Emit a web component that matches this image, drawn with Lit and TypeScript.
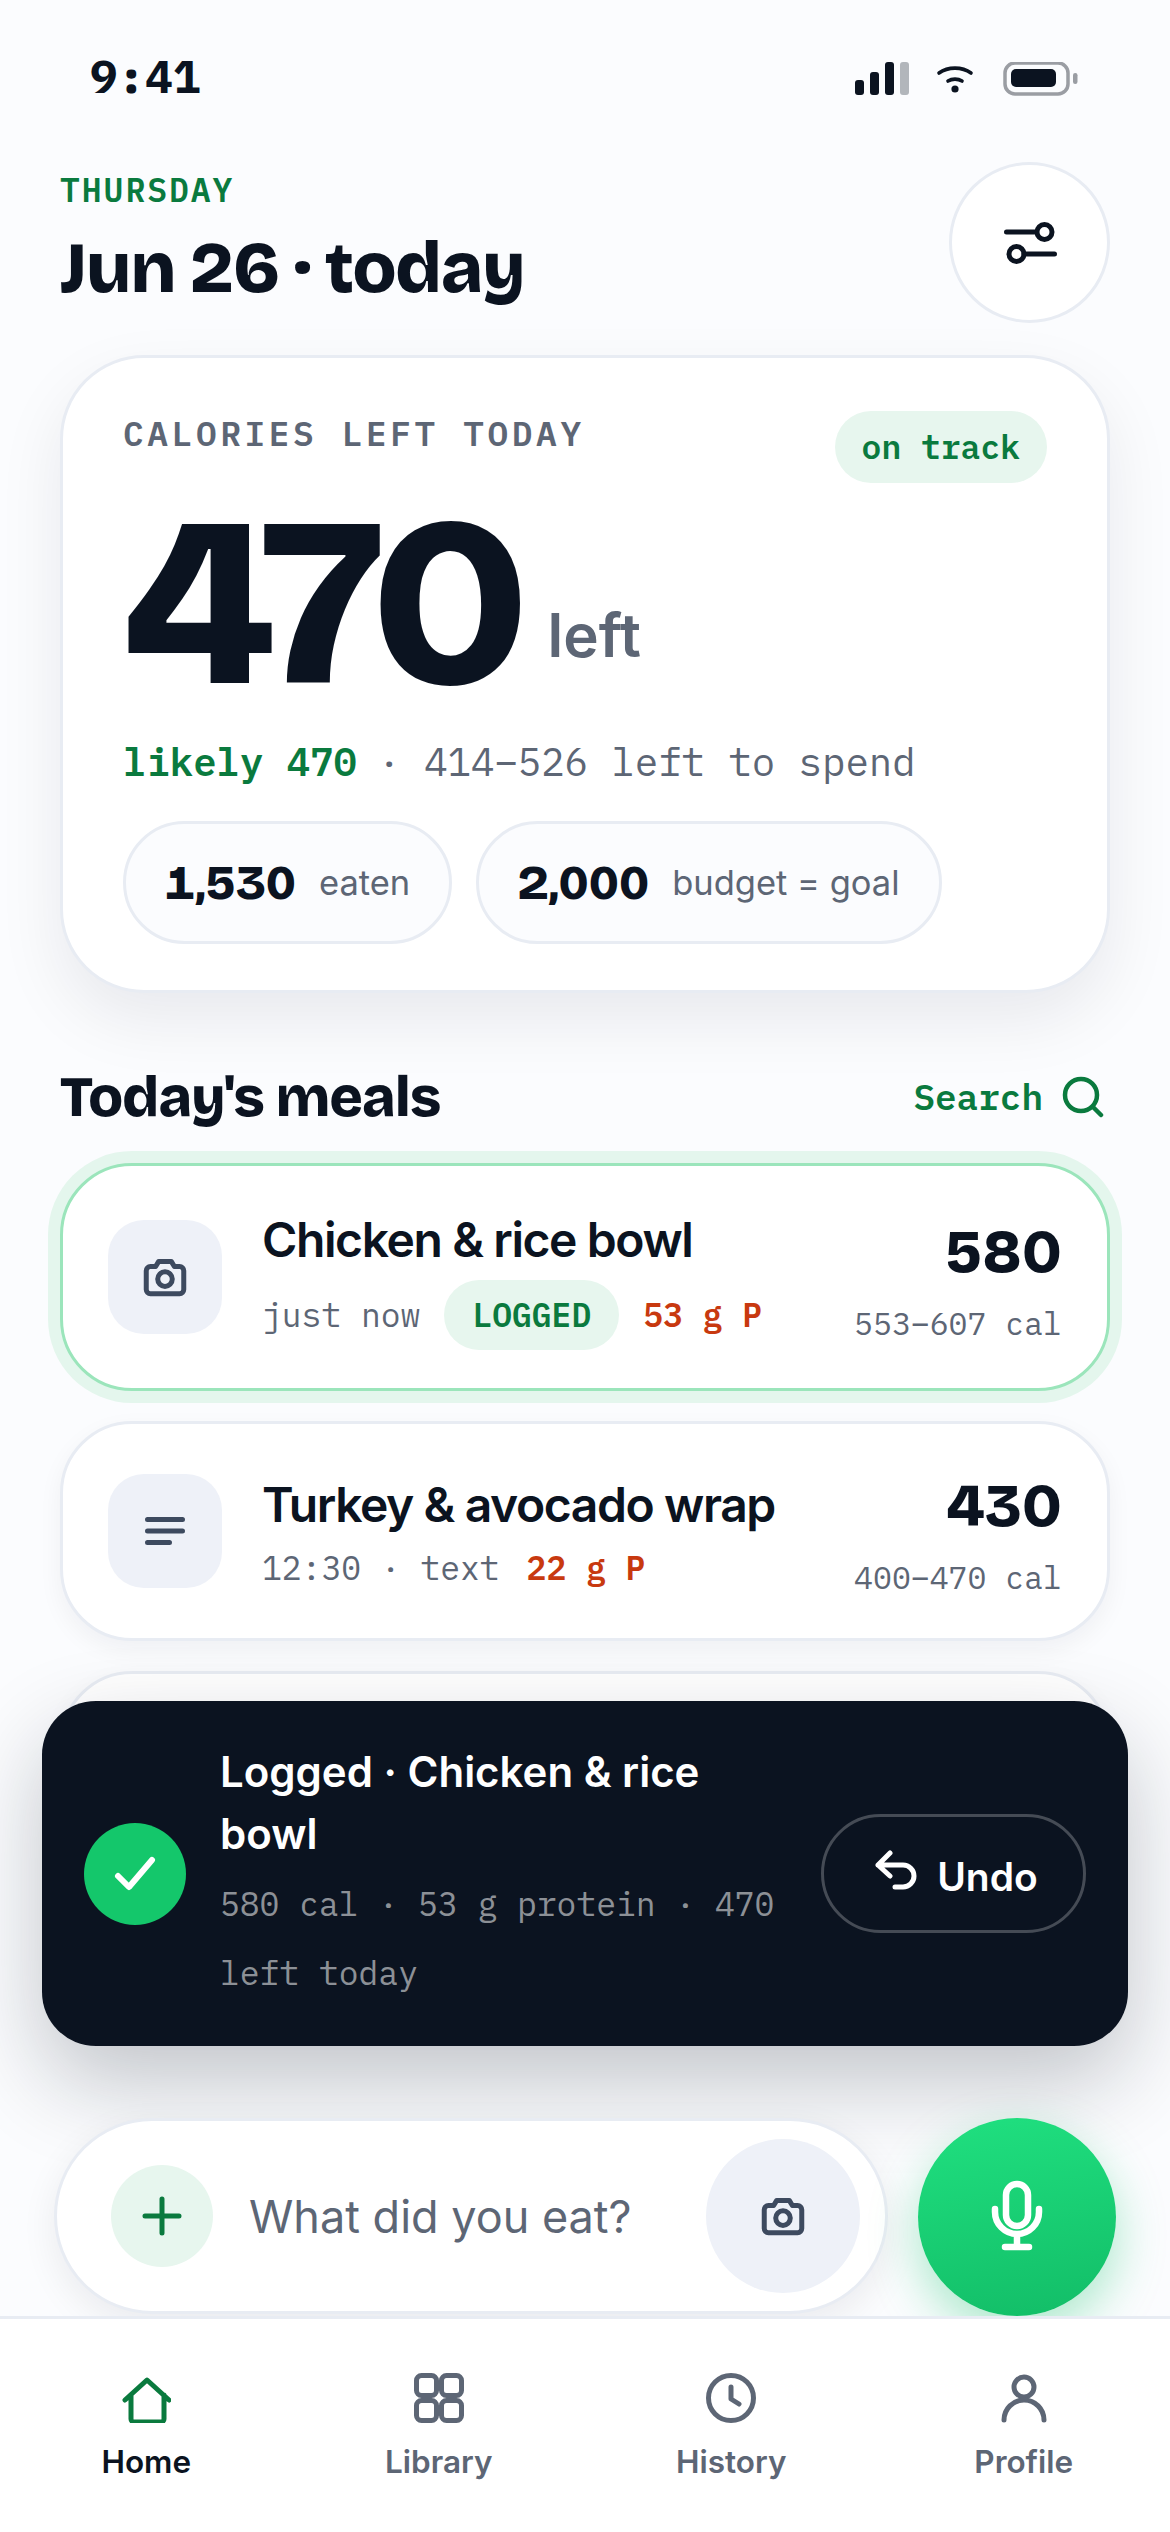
import { LitElement, html, css, svg } from "lit";
import { customElement } from "lit/decorators.js";

const cameraIcon = html`<svg class="ico-cam" viewBox="0 0 24 24" fill="none" stroke="currentColor" stroke-width="2.4" stroke-linecap="round" stroke-linejoin="round"><path d="M3 9a2 2 0 0 1 2-2h2.5l1.5-2.5h6L16.5 7H19a2 2 0 0 1 2 2v9a2 2 0 0 1-2 2H5a2 2 0 0 1-2-2Z"/><circle cx="12" cy="13" r="3.5"/></svg>`;

const navItems = [
  { label: "Home", active: true, icon: svg`<path d="M4 27 26 7l22 20M10 22v24a3 3 0 0 0 3 3h27a3 3 0 0 0 3-3V22"/>` },
  { label: "Library", active: false, icon: svg`<rect x="2.5" y="2.5" width="20" height="20" rx="5"/><rect x="27.5" y="2.5" width="20" height="20" rx="5"/><rect x="2.5" y="27.5" width="20" height="20" rx="5"/><rect x="27.5" y="27.5" width="20" height="20" rx="5"/>` },
  { label: "History", active: false, icon: svg`<circle cx="25" cy="25" r="22.5"/><path d="M25 14v12l8 5"/>` },
  { label: "Profile", active: false, icon: svg`<circle cx="25" cy="14" r="10"/><path d="M5 47a20 20 0 0 1 40 0"/>` },
];

@customElement("app-root")
export class AppRoot extends LitElement {
  static styles = css`
    :host {
      --mono: "IBM Plex Mono", "Liberation Mono", monospace;
      --head: "Bricolage Grotesque", Inter, sans-serif;
      display: flex;
      flex-direction: column;
      width: 1170px;
      height: 2532px;
      position: relative;
      overflow: hidden;
      background: #fbfcfe;
      color: #0b1320;
      font-family: Inter, "Noto Sans", sans-serif;
      font-variation-settings: "opsz" 14;
    }
    main { flex: 1; min-height: 0; overflow: hidden; padding: 0 60px; }

    .status { height: 162px; display: flex; justify-content: space-between; padding: 48px 31px 0 30px; box-sizing: border-box; }
    .time { font: 700 46px/56px var(--mono); }
    .status-icons { display: flex; align-items: flex-start; padding-top: 14px; }
    .status-icons svg { display: block; width: 224px; height: 40px; }

    .head { display: flex; justify-content: space-between; height: 161px; }
    .day { font: 600 33px/36px var(--mono); letter-spacing: 2px; color: #0a7a3e; margin: 10px 0 0; }
    .title { font-family: var(--head); font-variation-settings: "opsz" 24; font-size: 72px; line-height: 80px; font-weight: 800; letter-spacing: -1.4px; margin: 20px 0 0; white-space: nowrap; }
    .settings { width: 161px; height: 161px; box-sizing: border-box; border: 3px solid #e8ecf3; border-radius: 50%; background: #fff; display: flex; align-items: center; justify-content: center; }
    .settings svg { width: 60px; height: 60px; fill: none; stroke: #0b1320; stroke-width: 5; stroke-linecap: round; }

    .hero { margin-top: 32px; height: 638px; box-sizing: border-box; background: #fff; border: 3px solid #e8ecf3; border-radius: 84px; padding: 50px 60px 0; box-shadow: 0 27px 66px rgba(11,19,32,.08); }
    .hero-top { display: flex; justify-content: space-between; height: 72px; margin-top: 3px; }
    .hero-label { font: 600 34.5px/44px var(--mono); letter-spacing: 3.6px; color: #5d6675; }
    .on-track { font: 600 33px/72px var(--mono); color: #0a7a3e; background: #e7f6ee; border-radius: 36px; padding: 0 27px; height: 72px; }
    .big-row { display: flex; align-items: flex-end; margin-top: 23px; height: 196px; gap: 29px; }
    .big { font-family: var(--head); font-variation-settings: "opsz" 80; font-size: 240px; line-height: 196px; font-weight: 800; letter-spacing: -12px; }
    .left { font-variation-settings: "opsz" 20; font-size: 60px; line-height: 70px; font-weight: 600; color: #5d6675; padding-bottom: 32px; }
    .likely { font: 400 39px/50px var(--mono); color: #5d6675; margin-top: 35px; white-space: nowrap; }
    .likely b { color: #0a7a3e; font-weight: 600; margin-right: -3px; }
    .stats { display: flex; gap: 24px; margin-top: 34px; }
    .stat { height: 123px; box-sizing: border-box; border: 3px solid #e8ecf3; border-radius: 62px; background: #fbfcfe; display: flex; align-items: center; gap: 23px; padding: 0 39px; }
    .stat b { font-family: var(--head); font-variation-settings: "opsz" 16; font-size: 48px; font-weight: 800; font-variant-numeric: tabular-nums; }
    .stat span { font-size: 34.5px; color: #5d6675; }

    .sec { display: flex; justify-content: space-between; align-items: center; height: 60px; margin-top: 74px; margin-bottom: 36px; }
    .sec h2 { margin: 0; font-family: var(--head); font-variation-settings: "opsz" 19; font-size: 57px; font-weight: 800; letter-spacing: -1px; line-height: 60px; }
    .search { display: flex; align-items: center; gap: 19px; font: 600 36px/44px var(--mono); color: #0a7a3e; }
    .search svg { width: 42px; height: 42px; fill: none; stroke: currentColor; stroke-width: 4.5; stroke-linecap: round; display: block; margin-right: 6px; }

    .meals { display: flex; flex-direction: column; gap: 30px; }
    .meal { background: #fff; border: 3px solid #e8ecf3; border-radius: 72px; box-sizing: border-box; padding: 46px 45px 36px; display: flex; align-items: center; gap: 40px; box-shadow: 0 9px 24px rgba(11,19,32,.05); min-height: 220px; }
    .meal.new { border-color: #9be5bb; box-shadow: 0 0 0 12px #e4f6ed; height: 228px; }
    .tile { flex: none; width: 114px; height: 114px; border-radius: 36px; background: #eef1f8; color: #3d4a5f; display: flex; align-items: center; justify-content: center; margin-top: -10px; }
    .ico-cam { width: 50px; height: 50px; display: block; }
    .tile .lines { width: 50px; height: 50px; fill: none; stroke: currentColor; stroke-width: 5; stroke-linecap: round; display: block; }
    .body { flex: 1; min-width: 0; margin-top: -3px; }
    .name { font-variation-settings: "opsz" 16; font-size: 48px; line-height: 56px; font-weight: 600; letter-spacing: -1.4px; white-space: nowrap; }
    .meta { display: flex; align-items: center; gap: 24px; font: 400 33px/50px var(--mono); color: #5d6675; margin-top: 10px; white-space: nowrap; }
    .meta.plain { gap: 27px; }
    .meal.new .meta { margin-top: 12px; }
    .pill { font-weight: 600; color: #0a7a3e; background: #e7f6ee; height: 70px; line-height: 70px; padding: 0 28px; border-radius: 35px; }
    .prot { font-weight: 600; color: #c8390f; }
    .nums { flex: none; text-align: right; }
    .kcal { font-family: var(--head); font-variation-settings: "opsz" 20; font-size: 60px; line-height: 72px; font-weight: 800; }
    .range { font: 400 31.5px/48px var(--mono); color: #5d6675; margin-top: 12px; }

    .toast { position: absolute; left: 42px; right: 42px; top: 1701px; height: 345px; box-sizing: border-box; background: #0b1320; border-radius: 54px; color: #fff; display: flex; align-items: center; padding: 0 42px; gap: 34px; box-shadow: 0 36px 90px rgba(11,19,32,.24); }
    .check { flex: none; width: 102px; height: 102px; border-radius: 50%; background: #14c76b; display: flex; align-items: center; justify-content: center; }
    .check svg { width: 46px; height: 46px; fill: none; stroke: #fff; stroke-width: 6; stroke-linecap: round; stroke-linejoin: round; }
    .t-text { flex: 1; min-width: 0; }
    .t-title { font-size: 42px; line-height: 62px; font-weight: 600; }
    .t-sub { font: 400 33px/69px var(--mono); color: rgba(255,255,255,.55); margin-top: 4px; }
    .undo { flex: none; width: 265px; height: 119px; box-sizing: border-box; border: 3px solid rgba(255,255,255,.24); border-radius: 60px; display: flex; align-items: center; justify-content: center; gap: 18px; font-size: 39px; font-weight: 600; padding: 5px 0 0 6px; }
    .undo svg { width: 44px; height: 42px; fill: none; stroke: #fff; stroke-width: 5; stroke-linecap: round; stroke-linejoin: round; margin-top: -10px; }

    .composer { position: absolute; left: 54px; right: 54px; top: 2118px; height: 198px; display: flex; align-items: flex-start; gap: 30px; }
    .input { flex: 1; height: 196px; box-sizing: border-box; background: #fff; border: 3px solid #e8ecf3; border-radius: 98px; display: flex; align-items: center; padding: 0 25px 0 54px; box-shadow: 0 12px 36px rgba(11,19,32,.07); }
    .plus { flex: none; width: 102px; height: 102px; border-radius: 50%; background: #e7f6ee; display: flex; align-items: center; justify-content: center; }
    .plus svg { width: 40px; height: 40px; fill: none; stroke: #0a7a3e; stroke-width: 5; stroke-linecap: round; }
    .ph { flex: 1; font-size: 45px; color: #5d6675; margin-left: 36px; white-space: nowrap; }
    .cam { flex: none; width: 154px; height: 154px; border-radius: 50%; background: #eef1f8; color: #3d4a5f; display: flex; align-items: center; justify-content: center; }
    .mic { flex: none; width: 198px; height: 198px; border-radius: 50%; background: linear-gradient(170deg,#20e080,#12bd67); display: flex; align-items: center; justify-content: center; box-shadow: 0 18px 48px rgba(20,199,107,.35); }
    .mic svg { width: 72px; height: 76px; fill: none; stroke: #fff; stroke-width: 6.5; stroke-linecap: round; }

    nav { flex: none; position: relative; z-index: 2; height: 216px; box-sizing: border-box; border-top: 3px solid #e8ecf3; background: #fff; display: grid; grid-template-columns: repeat(4, 1fr); padding: 54px 0 0; }
    .tab { display: flex; flex-direction: column; align-items: center; color: #5d6675; }
    .tab svg { width: 50px; height: 50px; fill: none; stroke: currentColor; stroke-width: 5; stroke-linecap: round; stroke-linejoin: round; display: block; }
    .tab.on svg { stroke: #0a7a3e; }
    .tab span { font-size: 31.5px; line-height: 40px; font-weight: 600; margin-top: 19px; }
    .tab.on span { color: #0b1320; }
  `;

  render() {
    return html`
      <main>
        <div class="status">
          <div class="time">9:41</div>
          <div class="status-icons">
            <svg viewBox="0 0 224 40">
              <g fill="#0b1320">
                <rect x="0" y="18" width="9" height="15" rx="3"/>
                <rect x="15" y="10" width="9" height="23" rx="3"/>
                <rect x="30" y="0" width="9" height="33" rx="3"/>
                <rect x="45" y="0" width="9" height="33" rx="3" opacity=".3"/>
                <circle cx="100" cy="27" r="3.6"/>
              </g>
              <g fill="none" stroke="#0b1320" stroke-width="3.6" stroke-linecap="round">
                <path d="M84 11c9-6.500 23-6.500 32 0"/>
                <path d="M93 19c4-2.500 10-2.500 14 0"/>
              </g>
              <rect x="150" y="1" width="63" height="31" rx="10" fill="none" stroke="#9a9da3" stroke-width="3.500"/>
              <rect x="156" y="7" width="45" height="18" rx="5" fill="#0b1320"/>
              <rect x="218" y="11" width="4.500" height="11" rx="2.200" fill="#9a9da3"/>
            </svg>
          </div>
        </div>

        <div class="head">
          <div>
            <div class="day">THURSDAY</div>
            <div class="title">Jun 26 · today</div>
          </div>
          <div class="settings">
            <svg viewBox="0 0 60 60"><path d="M6.500 19H36M24 41h30.500"/><circle cx="44.500" cy="19" r="7.500"/><circle cx="16.500" cy="41" r="7.500"/></svg>
          </div>
        </div>

        <section class="hero">
          <div class="hero-top">
            <div class="hero-label">CALORIES LEFT TODAY</div>
            <div class="on-track">on track</div>
          </div>
          <div class="big-row"><div class="big">470</div><div class="left">left</div></div>
          <div class="likely"><b>likely 470</b> · 414–526 left to spend</div>
          <div class="stats">
            <div class="stat"><b>1,530</b><span>eaten</span></div>
            <div class="stat"><b>2,000</b><span>budget = goal</span></div>
          </div>
        </section>

        <div class="sec">
          <h2>Today's meals</h2>
          <div class="search">Search<svg viewBox="0 0 42 42"><circle cx="19" cy="19" r="16"/><path d="M31 31l8 8"/></svg></div>
        </div>

        <div class="meals">
          <article class="meal new">
            <div class="tile">${cameraIcon}</div>
            <div class="body">
              <div class="name">Chicken &amp; rice bowl</div>
              <div class="meta"><span>just now</span><span class="pill">LOGGED</span><span class="prot">53 g P</span></div>
            </div>
            <div class="nums"><div class="kcal">580</div><div class="range">553–607 cal</div></div>
          </article>
          <article class="meal">
            <div class="tile"><svg class="lines" viewBox="0 0 50 50"><path d="M7.500 13.500h35M7.500 25h35M7.500 36.500h22"/></svg></div>
            <div class="body">
              <div class="name">Turkey &amp; avocado wrap</div>
              <div class="meta plain"><span>12:30 · text</span><span class="prot">22 g P</span></div>
            </div>
            <div class="nums"><div class="kcal">430</div><div class="range">400–470 cal</div></div>
          </article>
          <article class="meal"></article>
        </div>
      </main>

      <div class="toast">
        <div class="check"><svg viewBox="0 0 46 46"><path d="M6 25l11 11L40 9"/></svg></div>
        <div class="t-text">
          <div class="t-title">Logged · Chicken &amp; rice bowl</div>
          <div class="t-sub">580 cal · 53 g protein · 470 left today</div>
        </div>
        <div class="undo"><svg viewBox="0 0 44 42"><path d="M15 3 3 15l12 11M3 15h25a11 11 0 0 1 0 22h-8"/></svg>Undo</div>
      </div>

      <div class="composer">
        <div class="input">
          <div class="plus"><svg viewBox="0 0 40 40"><path d="M20 3v34M3 20h34"/></svg></div>
          <div class="ph">What did you eat?</div>
          <div class="cam">${cameraIcon}</div>
        </div>
        <div class="mic"><svg viewBox="0 0 72 76"><rect x="25" y="5" width="22" height="42" rx="11"/><path d="M14 30v3a22 22 0 0 0 44 0v-3M36 55v13M24 68h24"/></svg></div>
      </div>

      <nav>
        ${navItems.map(
          (n) => html`<div class="tab ${n.active ? "on" : ""}"><svg viewBox="0 0 50 50">${n.icon}</svg><span>${n.label}</span></div>`
        )}
      </nav>
    `;
  }
}
